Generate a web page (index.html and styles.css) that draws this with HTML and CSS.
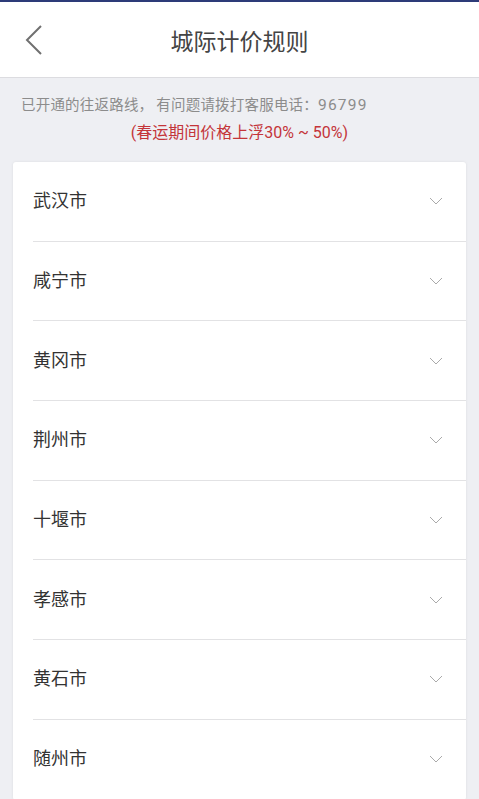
FILE: index.html
```html
<!DOCTYPE html>
<html lang="zh">
<head>
<meta charset="utf-8">
<link rel="stylesheet" href="styles.css">
</head>
<body>
<div class="topline"></div>
<header class="header">
  <span class="back">
    <svg width="18" height="30" viewBox="0 0 18 30"><polyline points="16,1 2,15 16,29" fill="none" stroke="#707070" stroke-width="2"/></svg>
  </span>
  <h1 class="title">城际计价规则</h1>
</header>
<div class="notice">
  <p class="info">已开通的往返路线<span class="comma">，</span>有问题请拨打客服电话：<span class="num">96799</span></p>
  <p class="warn">(春运期间价格上浮30% ~ 50%)</p>
</div>
<div class="card">
  <div class="row"><span class="name">武汉市</span><svg class="chev" width="14" height="8" viewBox="0 0 14 8"><polyline points="1,1 7,7 13,1" fill="none" stroke="#aaa" stroke-width="1"/></svg></div>
  <div class="row"><span class="name">咸宁市</span><svg class="chev" width="14" height="8" viewBox="0 0 14 8"><polyline points="1,1 7,7 13,1" fill="none" stroke="#aaa" stroke-width="1"/></svg></div>
  <div class="row"><span class="name">黄冈市</span><svg class="chev" width="14" height="8" viewBox="0 0 14 8"><polyline points="1,1 7,7 13,1" fill="none" stroke="#aaa" stroke-width="1"/></svg></div>
  <div class="row"><span class="name">荆州市</span><svg class="chev" width="14" height="8" viewBox="0 0 14 8"><polyline points="1,1 7,7 13,1" fill="none" stroke="#aaa" stroke-width="1"/></svg></div>
  <div class="row"><span class="name">十堰市</span><svg class="chev" width="14" height="8" viewBox="0 0 14 8"><polyline points="1,1 7,7 13,1" fill="none" stroke="#aaa" stroke-width="1"/></svg></div>
  <div class="row"><span class="name">孝感市</span><svg class="chev" width="14" height="8" viewBox="0 0 14 8"><polyline points="1,1 7,7 13,1" fill="none" stroke="#aaa" stroke-width="1"/></svg></div>
  <div class="row"><span class="name">黄石市</span><svg class="chev" width="14" height="8" viewBox="0 0 14 8"><polyline points="1,1 7,7 13,1" fill="none" stroke="#aaa" stroke-width="1"/></svg></div>
  <div class="row"><span class="name">随州市</span><svg class="chev" width="14" height="8" viewBox="0 0 14 8"><polyline points="1,1 7,7 13,1" fill="none" stroke="#aaa" stroke-width="1"/></svg></div>
</div>
</body>
</html>
```
FILE: styles.css
```css
* { box-sizing: border-box; }
html, body { margin: 0; padding: 0; }
body {
  width: 479px;
  height: 799px;
  overflow: hidden;
  background: #eeeff3;
  font-family: "Noto Sans CJK SC", "Noto Sans", sans-serif;
}
.topline { height: 2px; background: #2d3b78; }
.header {
  height: 76px;
  background: #fff;
  border-bottom: 1px solid #dcdce0;
  display: flex;
  align-items: center;
  justify-content: center;
  position: relative;
}
.back {
  position: absolute;
  left: 25px;
  top: 23px;
  width: 18px;
  height: 30px;
  display: block;
}
.back svg { display: block; }
.title {
  margin: 0;
  font-size: 23px;
  font-weight: normal;
  color: #444;
}
.notice { padding: 14px 0 0; }
.info {
  margin: 0 0 0 21px;
  font-size: 14.5px;
  letter-spacing: 0.2px;
  line-height: 24px;
  color: #8c8c8c;
}
.comma { margin-right: 3px; }
.num { letter-spacing: 1.2px; font-family: "Roboto", sans-serif; font-size: 15.5px; }
.warn {
  margin: 4px 0 0;
  text-align: center;
  font-size: 16px;
  line-height: 24px;
  color: #c4353a;
  font-weight: normal;
  font-family: "Roboto", "Noto Sans CJK SC", sans-serif;
}
.card {
  margin: 17px 13px 0 13px;
  background: #fff;
  border-radius: 3px;
  box-shadow: 0 0 3px rgba(0,0,0,0.08);
}
.row {
  height: 79.7px;
  margin-left: 20px;
  padding-right: 23px;
  border-bottom: 1px solid #e2e2e4;
  display: flex;
  align-items: center;
  justify-content: space-between;
  padding-bottom: 4px;
}
.name {
  font-size: 18px;
  color: #333;
}
.chev { display: block; margin-top: 4px; }
```
